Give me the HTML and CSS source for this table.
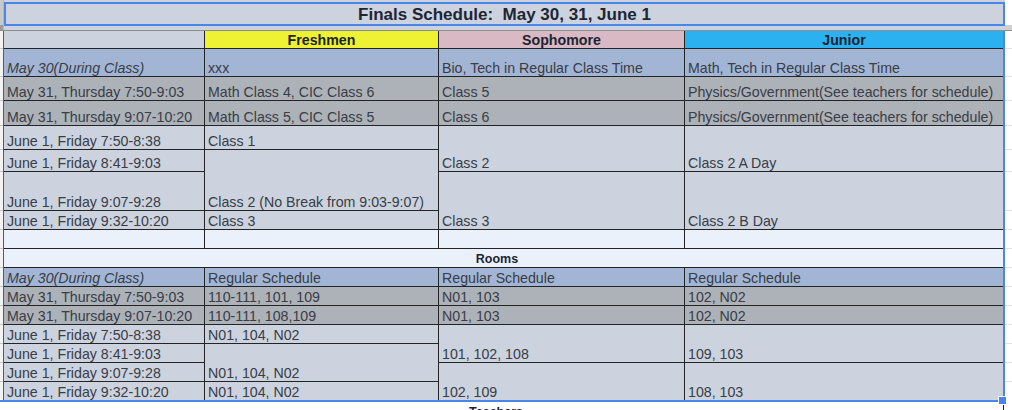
FILE: index.html
```html
<!DOCTYPE html>
<html>
<head>
<meta charset="utf-8">
<title>Finals Schedule</title>
<link rel="stylesheet" href="styles.css">
</head>
<body>
<div class="sheet">
  <div class="title-row">
    <div class="gutter-top"></div>
    <div class="title-cell"><div class="title-box">Finals Schedule:&nbsp; May 30, 31, June 1</div></div>
    <div class="title-right"></div>
  </div>
  <div class="body-area">
    <div class="sel">
      <div class="rownums">
        <div></div><div></div><div></div><div></div><div></div><div></div><div></div><div></div><div></div>
        <div></div><div></div><div></div><div></div><div></div><div></div><div></div><div></div>
      </div>
      <div class="main">
        <div class="c lt"></div>
        <div class="c yel hd">Freshmen</div>
        <div class="c pink hd">Sophomore</div>
        <div class="c cyan hd">Junior</div>

        <div class="c bl it">May 30(During Class)</div>
        <div class="c bl">xxx</div>
        <div class="c bl">Bio, Tech in Regular Class Time</div>
        <div class="c bl">Math, Tech in Regular Class Time</div>

        <div class="c gr">May 31, Thursday 7:50-9:03</div>
        <div class="c gr">Math Class 4, CIC Class 6</div>
        <div class="c gr">Class 5</div>
        <div class="c gr">Physics/Government(See teachers for schedule)</div>

        <div class="c gr">May 31, Thursday 9:07-10:20</div>
        <div class="c gr">Math Class 5, CIC Class 5</div>
        <div class="c gr">Class 6</div>
        <div class="c gr">Physics/Government(See teachers for schedule)</div>

        <div class="c lt">June 1, Friday 7:50-8:38</div>
        <div class="c lt">Class 1</div>
        <div class="c lt span2">Class 2</div>
        <div class="c lt span2">Class 2 A Day</div>

        <div class="c lt">June 1, Friday 8:41-9:03</div>
        <div class="c lt span2">Class 2 (No Break from 9:03-9:07)</div>

        <div class="c lt">June 1, Friday 9:07-9:28</div>
        <div class="c lt span2">Class 3</div>
        <div class="c lt span2">Class 2 B Day</div>

        <div class="c lt">June 1, Friday 9:32-10:20</div>
        <div class="c lt">Class 3</div>

        <div class="c wh"></div>
        <div class="c wh"></div>
        <div class="c wh"></div>
        <div class="c wh"></div>

        <div class="c wh section">Rooms</div>

        <div class="c bl it">May 30(During Class)</div>
        <div class="c bl">Regular Schedule</div>
        <div class="c bl">Regular Schedule</div>
        <div class="c bl">Regular Schedule</div>

        <div class="c gr">May 31, Thursday 7:50-9:03</div>
        <div class="c gr">110-111, 101, 109</div>
        <div class="c gr">N01, 103</div>
        <div class="c gr">102, N02</div>

        <div class="c gr">May 31, Thursday 9:07-10:20</div>
        <div class="c gr">110-111, 108,109</div>
        <div class="c gr">N01, 103</div>
        <div class="c gr">102, N02</div>

        <div class="c lt">June 1, Friday 7:50-8:38</div>
        <div class="c lt">N01, 104, N02</div>
        <div class="c lt span2">101, 102, 108</div>
        <div class="c lt span2">109, 103</div>

        <div class="c lt">June 1, Friday 8:41-9:03</div>
        <div class="c lt span2">N01, 104, N02</div>

        <div class="c lt">June 1, Friday 9:07-9:28</div>
        <div class="c lt span2">102, 109</div>
        <div class="c lt span2">108, 103</div>

        <div class="c lt">June 1, Friday 9:32-10:20</div>
        <div class="c lt">N01, 104, N02</div>
      </div>
    </div>
    <div class="right">
      <div></div><div></div><div></div><div></div><div></div><div></div><div></div><div></div><div></div>
      <div></div><div></div><div></div><div></div><div></div><div></div><div></div><div></div>
    </div>
  </div>
  <div class="teachers-row"><div class="teachers">Teachers</div></div>
  <div class="handle"></div>
  <div class="handle-tail"></div>
</div>
</body>
</html>
```

FILE: styles.css
```css
html, body {
  margin: 0;
  padding: 0;
  background: #ffffff;
}

body {
  font-family: "Liberation Sans", Arial, sans-serif;
  color: #383d46;
}

.sheet {
  width: 1012px;
  height: 410px;
  overflow: hidden;
  position: relative;
  background: #ffffff;
}

/* ---------- title row ---------- */
.title-row {
  display: flex;
  height: 30px;
  border-bottom: 1px solid #8e8e8e;
}

.gutter-top {
  width: 3px;
  background: linear-gradient(#c9c9c9 25px, #9a9a9a 25px);
  border-right: 1px solid #b8b8b8;
}

.title-cell {
  width: 1001px;
  background: #ccd3df;
  padding-top: 2px;
  box-sizing: border-box;
}

.title-box {
  height: 24px;
  box-sizing: border-box;
  border: 2px solid #4a86e8;
  padding-top: 1px;
  display: flex;
  align-items: center;
  justify-content: center;
  font-weight: bold;
  font-size: 17px;
  line-height: 19px;
  color: #1e2533;
}

.title-right {
  flex: 1;
  background: linear-gradient(#ffffff 25px, #d0d0d0 25px);
}

/* ---------- body grid ---------- */
.body-area {
  display: flex;
  align-items: flex-start;
}

.sel {
  display: flex;
  border-right: 2px solid #4a86e8;
  border-bottom: 2px solid #4a86e8;
}

.rownums,
.main,
.right {
  display: grid;
  grid-template-rows: 17px 27px 23px 24px 23px 21px 38px 18px 18px 18px 18px 18px 18px 18px 18px 18px 18px;
  gap: 1px;
}

.rownums {
  width: 3px;
  background: #c6c6c6;
  border-right: 1px solid #5a5a5a;
}

.rownums div {
  background: #f3f3f3;
}

.main {
  grid-template-columns: 200px 233px 245px 318px;
  background: #222426;
}

.right {
  flex: 1;
  background: #e2e2e2;
}

.right div {
  background: #ffffff;
}

/* ---------- cells ---------- */
.c {
  display: flex;
  align-items: flex-end;
  padding: 0 3px;
  font-size: 14.2px;
  line-height: 15px;
  white-space: nowrap;
  overflow: hidden;
  min-width: 0;
}

.span2 {
  grid-row: span 2;
}

.it {
  font-style: italic;
}

.hd {
  justify-content: center;
  font-weight: bold;
  color: #1c2433;
}

.section {
  grid-column: 1 / -1;
  justify-content: center;
  padding-right: 16px;
  font-weight: bold;
  font-size: 12.5px;
  color: #1c2433;
}

.lt { background: #ccd3df; }
.bl { background: #a3b5d4; }
.gr { background: #adb1b8; }
.wh { background: #ebf1fb; }
.yel { background: #eef232; }
.pink { background: #d9b9c3; }
.cyan { background: #2bb1ef; }

/* ---------- bottom ---------- */
.teachers-row {
  display: flex;
  padding-left: 4px;
}

.teachers {
  width: 1000px;
  height: 18px;
  display: flex;
  align-items: flex-end;
  justify-content: center;
  padding-right: 16px;
  box-sizing: border-box;
  font-weight: bold;
  font-size: 12.5px;
  line-height: 15px;
  color: #1c2433;
}

.handle {
  position: absolute;
  left: 998px;
  top: 396px;
  width: 7px;
  height: 7px;
  background: #4a86e8;
  border: 1px solid #ffffff;
}

.handle-tail {
  position: absolute;
  left: 1003px;
  top: 405px;
  width: 1px;
  height: 5px;
  background: #222;
}
```
